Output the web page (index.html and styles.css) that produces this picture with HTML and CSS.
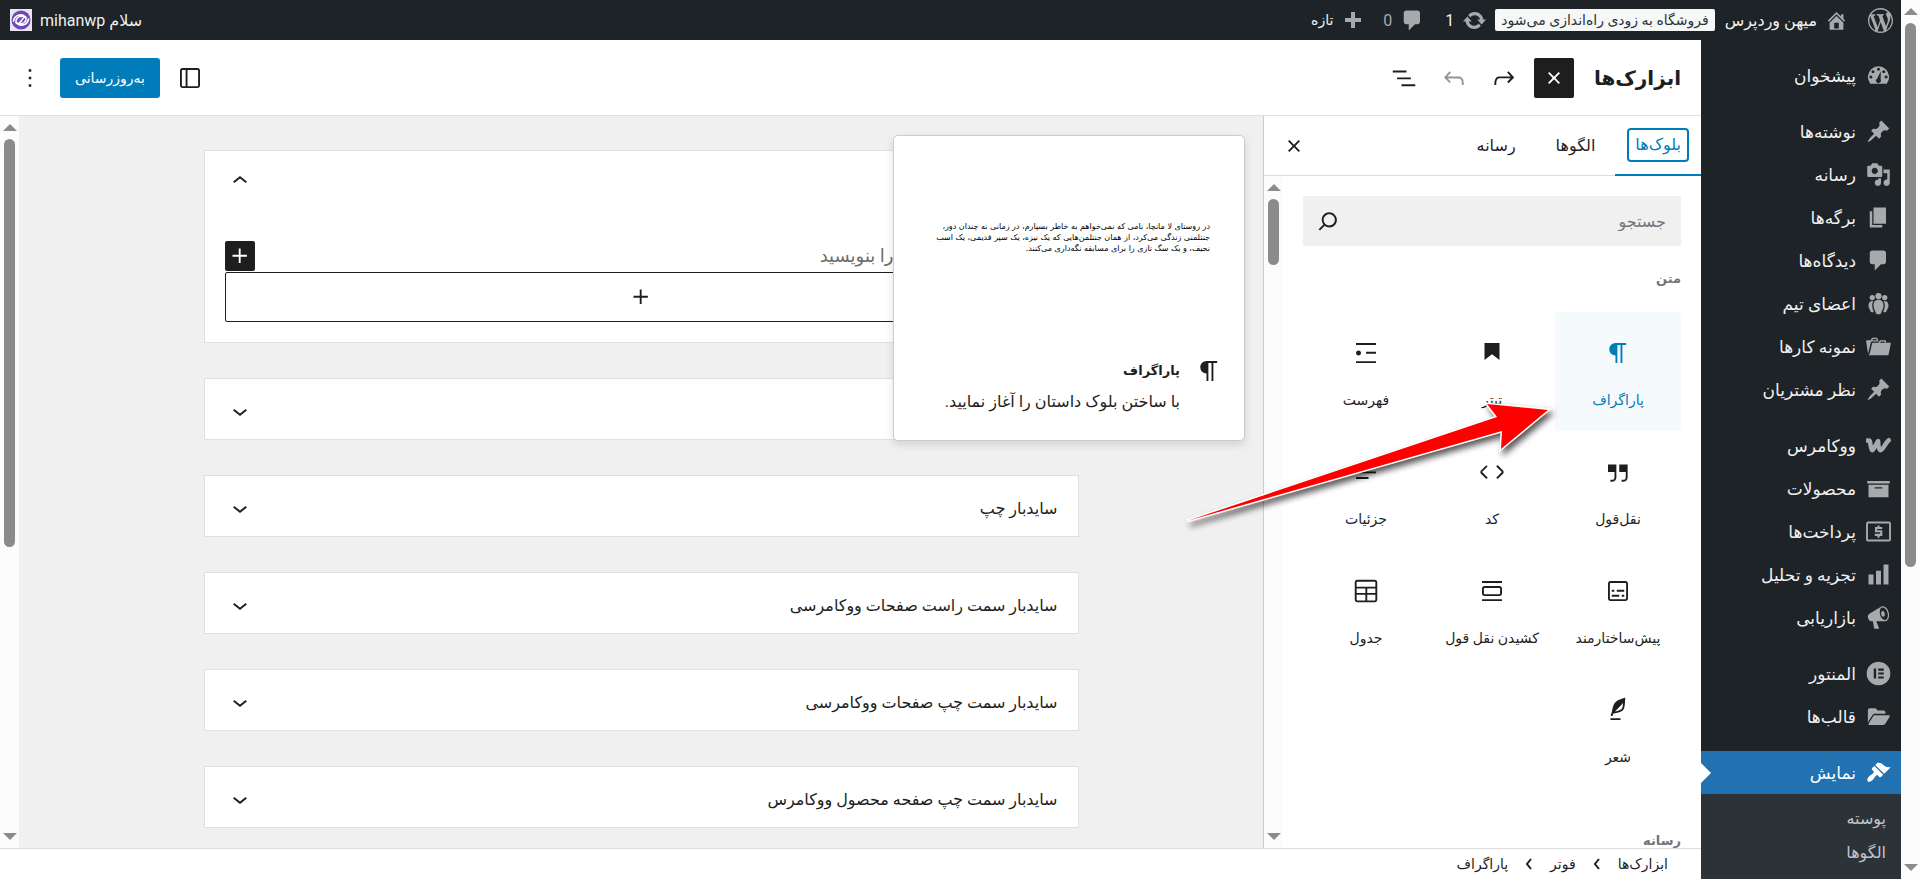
FILE: index.html
```html
<!DOCTYPE html>
<html lang="fa" dir="rtl">
<head>
<meta charset="utf-8">
<title>ابزارک‌ها</title>
<link rel="stylesheet" href="styles.css">
</head>
<body>
<svg class="sprite" aria-hidden="true">
  <symbol id="pin" viewBox="0 0 20 20"><path d="M10.44 3.02l1.82-1.82 6.36 6.35-1.83 1.82c-1.05-.68-2.48-.57-3.41.36l-.75.75c-.92.93-1.04 2.35-.35 3.41l-1.83 1.82-2.41-2.41-2.8 2.79c-.42.42-3.38 2.71-3.8 2.29s1.86-3.39 2.28-3.81l2.79-2.79L4.1 9.36l1.83-1.82c1.05.69 2.48.57 3.4-.36l.75-.75c.93-.92 1.05-2.35.36-3.41z"/></symbol>
  <symbol id="comment" viewBox="0 0 20 20"><path d="M5 2h9c1.1 0 2 .9 2 2v7c0 1.1-.9 2-2 2h-2l-5 5v-5H5c-1.1 0-2-.9-2-2V4c0-1.1.9-2 2-2z"/></symbol>
  <symbol id="close" viewBox="0 0 24 24"><path d="M12 13.06l3.712 3.713 1.061-1.06L13.061 12l3.712-3.712-1.06-1.06L12 10.938 8.288 7.227l-1.061 1.06L10.939 12l-3.712 3.712 1.06 1.061L12 13.061z"/></symbol>
  <symbol id="plus" viewBox="0 0 24 24"><path d="M11 12.5V17.5H12.5V12.5H17.5V11H12.5V6H11V11H6V12.5H11Z"/></symbol>
  <symbol id="down" viewBox="0 0 24 24"><path d="M17.5 11.6L12 16l-5.5-4.4.9-1.2L12 14l4.5-3.6 1 1.2z"/></symbol>
  <symbol id="paragraph" viewBox="0 0 24 24"><path d="M10 14v6h1.5V5.500H14V20h1.500V5.500h3V4H10a5 5 0 0 0 0 10z"/></symbol>
</svg>
<div class="page">
  <div class="scrollbar page-scroll" aria-hidden="true"><i class="up"></i><b></b><i class="dn"></i></div>
  <div class="site">
    <header class="adminbar">
      <a href="#" class="bar-item wp" aria-label="وردپرس"><svg class="i25" viewBox="0 0 20 20"><path d="M20 10c0-5.510-4.490-10-10-10C4.480 0 0 4.490 0 10c0 5.520 4.480 10 10 10 5.510 0 10-4.480 10-10zM7.780 15.370L4.370 6.220c.55-.02 1.170-.08 1.170-.08.5-.06.44-1.130-.06-1.110 0 0-1.450.11-2.370.11-.18 0-.37 0-.58-.01C4.120 2.690 6.870 1.110 10 1.110c2.330 0 4.450.87 6.050 2.340-.68-.11-1.650.39-1.650 1.580 0 .74.45 1.360.9 2.100.35.61.55 1.360.55 2.460 0 1.490-1.400 5-1.400 5l-3.030-8.370c.54-.02.82-.17.82-.17.5-.05.44-1.250-.06-1.220 0 0-1.440.12-2.380.12-.87 0-2.330-.12-2.330-.12-.5-.03-.56 1.200-.06 1.220l.92.08 1.260 3.410zM17.410 10c.24-.64.74-1.870.43-4.250.7 1.290 1.050 2.710 1.050 4.250 0 3.290-1.730 6.240-4.400 7.780.97-2.590 1.940-5.200 2.920-7.780zM6.100 18.090C3.120 16.650 1.110 13.530 1.110 10c0-1.300.23-2.480.72-3.590C3.250 10.300 4.670 14.200 6.100 18.090zm4.030-6.630l2.580 6.980c-.86.29-1.760.45-2.710.45-.79 0-1.570-.11-2.290-.33.81-2.380 1.620-4.740 2.420-7.100z"/></svg></a>
      <a href="#" class="bar-item home"><svg class="i23" viewBox="0 0 20 20"><path d="M16 8.500l1.530 1.530-1.060 1.060L10 4.600l-6.470 6.490-1.060-1.060L10 2.500l4 4v-2h2v4zm-6-2.460l6 5.990V18H4v-5.970zM12 17v-5H8v5h4z"/></svg><span>میهن وردپرس</span></a>
      <a href="#" class="store-badge">فروشگاه به زودی راه‌اندازی می‌شود</a>
      <a href="#" class="bar-item updates"><svg class="i25" viewBox="0 0 20 20"><path d="M10.200 3.280c3.530 0 6.430 2.610 6.920 6h2.080l-3.500 4-3.500-4h2.320c-.45-1.970-2.210-3.450-4.320-3.450-1.450 0-2.730.71-3.540 1.780L4.950 5.660C6.230 4.200 8.110 3.280 10.200 3.280zm-.4 13.440c-3.520 0-6.430-2.610-6.920-6H.8l3.500-4 3.500 4H5.480c.45 1.970 2.210 3.450 4.320 3.450 1.450 0 2.730-.71 3.540-1.780l1.710 1.950c-1.280 1.460-3.150 2.380-5.250 2.380z"/></svg><span>1</span></a>
      <a href="#" class="bar-item comments"><svg class="i25"><use href="#comment"/></svg><span>0</span></a>
      <a href="#" class="bar-item new"><svg class="i20" viewBox="0 0 20 20"><path d="M8 2h4v6h6v4h-6v6H8v-6H2V8h6z"/></svg><span>تازه</span></a>
      <a href="#" class="bar-item user"><span>سلام mihanwp</span><svg class="avatar" viewBox="0 0 22 22"><rect width="22" height="22" fill="#e9e5f3"/><circle cx="11" cy="11" r="9.500" fill="#6a4bb4"/><g fill="none" stroke="#fff" stroke-width="1.600" stroke-linecap="round"><path d="M3.500 12c1-6 8-8 11.500-4.500-4-1-8 0-9 4-.5 3 2 4 4 2l3-4"/><path d="M18.500 10c-1 6-8 8-11.500 4.500 4 1 8 0 9-4 .3-1.500-.8-2.500-2.300-2.300"/></g></svg></a>
    </header>
    <div class="shell">
      <nav class="menu" aria-label="منوی مدیریت">
        <ul>
          <li><a href="#"><svg viewBox="0 0 20 20"><path fill-rule="evenodd" d="M3.400 16.500A8.500 8.500 0 1 1 16.600 16.500zM10 3.800a1.200 1.200 0 1 0 .01 0zM5.600 5.700a1.200 1.200 0 1 0 .01 0zM14.200 5.700a1.200 1.200 0 1 0 .01 0zM3.900 9.900a1.200 1.200 0 1 0 .01 0zM16.100 9.900a1.200 1.200 0 1 0 .01 0zM11.800 6.500 9 12.300a2 2 0 1 0 2.700.8z"/></svg><span>پیشخوان</span></a></li>
          <li class="gap"><a href="#"><svg><use href="#pin"/></svg><span>نوشته‌ها</span></a></li>
          <li><a href="#"><svg viewBox="0 0 20 20"><path d="M13 11V4c0-.55-.45-1-1-1h-1.670L9 1H5L3.670 3H2c-.55 0-1 .45-1 1v7c0 .55.45 1 1 1h10c.55 0 1-.45 1-1zM7 4.500c1.380 0 2.500 1.120 2.500 2.500S8.380 9.500 7 9.500 4.500 8.380 4.500 7 5.620 4.500 7 4.500zM14 6h5v10.500c0 1.380-1.120 2.500-2.500 2.500S14 17.880 14 16.500s1.120-2.500 2.500-2.500c.17 0 .34.02.5.05V9h-3V6zm-4 8.050V13h2v3.500c0 1.380-1.120 2.500-2.500 2.500S7 17.880 7 16.500 8.120 14 9.500 14c.17 0 .34.02.5.05z"/></svg><span>رسانه</span></a></li>
          <li><a href="#"><svg viewBox="0 0 20 20"><path d="M6 15V2h10v13H6zm-1 1h8v2H3V5h2v11z"/></svg><span>برگه‌ها</span></a></li>
          <li><a href="#"><svg><use href="#comment"/></svg><span>دیدگاه‌ها</span></a></li>
          <li><a href="#"><svg viewBox="0 0 20 20"><circle cx="10" cy="4" r="2.500"/><circle cx="5" cy="5.200" r="2.100"/><circle cx="15" cy="5.200" r="2.100"/><path d="M10 7c3 0 4 2 4 4.500 0 3-1.500 4-2 6.500-.6.900-3.400.900-4 0-.5-2.500-2-3.500-2-6.500C6 9 7 7 10 7zM5.500 8C3 8 2 9.500 2 11.500c0 2.500 1.300 3 1.800 5 .5.600 1.700.700 2.400.300C5.600 14.500 5 14 5 11.500c0-1.500.2-2.500.9-3.400zM14.500 8c2.500 0 3.500 1.500 3.500 3.500 0 2.500-1.300 3-1.800 5-.5.600-1.700.700-2.400.300.600-2.300 1.200-2.800 1.200-5.300 0-1.500-.2-2.500-.9-3.400z"/></svg><span>اعضای تیم</span></a></li>
          <li><a href="#"><svg viewBox="0 0 20 20"><path d="M4 5H.78c-.37 0-.74.32-.69.84l1.560 9.990S3.500 8.470 3.860 6.700c.11-.53.61-.7.98-.7H10s-.7-2.080-.77-2.310C9.110 3.250 8.890 3 8.450 3H5.140c-.36 0-.7.23-.8.640C4.250 4.040 4 5 4 5zm4.880 0h-4s.42-1 .87-1h2.130c.48 0 1 1 1 1zM2.670 16.250c-.31.47-.76.75-1.260.75h15.730c.54 0 .92-.31 1.030-.83.44-2.190 1.680-8.440 1.680-8.440.07-.5-.3-.73-.62-.73H16V5.530c0-.16-.26-.53-.66-.53h-3.760c-.52 0-.87.58-.87.580L10 7H5.590c-.32 0-.63.19-.69.5 0 0-1.590 6.700-1.720 7.330-.07.37-.22.99-.51 1.420zM15.380 7H11s.58-1 1.130-1h2.290c.71 0 .96 1 .96 1z"/></svg><span>نمونه کارها</span></a></li>
          <li><a href="#"><svg><use href="#pin"/></svg><span>نظر مشتریان</span></a></li>
          <li class="gap"><a href="#"><svg viewBox="0 0 20 20"><path fill="none" stroke="currentColor" stroke-width="3.600" stroke-linejoin="round" stroke-linecap="round" d="M1 6h1.200c1.200 0 1 1 1.200 2.200.3 2 .7 5.600 1.600 5.600S8.600 8 9.700 6.500c.1 3 .4 7.300 2 7.300 1.800 0 3.800-6 6.500-8"/></svg><span>ووکامرس</span></a></li>
          <li><a href="#"><svg viewBox="0 0 20 20"><path d="M19 4v2H1V4h18zM2 7h16v10H2V7zm11 3V9H7v1h6z"/></svg><span>محصولات</span></a></li>
          <li><a href="#"><svg viewBox="0 0 20 20"><g fill="none" stroke="currentColor" stroke-width="1.500"><rect x=".8" y="2.800" width="18.400" height="14.400" rx=".8"/><path stroke-width="1.700" d="M13 7.200H8v2.600h4.200v2.900H7M10 5.200v2M10 12.700v2.200"/></g></svg><span>پرداخت‌ها</span></a></li>
          <li><a href="#"><svg viewBox="0 0 20 20"><path d="M18 18V2h-4v16h4zm-6 0V7H8v11h4zm-6 0v-8H2v8h4z"/></svg><span>تجزیه و تحلیل</span></a></li>
          <li><a href="#"><svg viewBox="0 0 20 20"><path d="M18.150 5.940c.46 1.620.38 3.220-.02 4.480-.42 1.280-1.260 2.180-2.300 2.480-.16.06-.26.06-.4.06-.06.02-.12.02-.18.02-.06.02-.14.02-.22.02h-6.800l2.220 5.500c.02.14-.06.26-.14.34-.08.1-.24.16-.34.16H6.950c-.1 0-.26-.06-.34-.16-.08-.08-.16-.2-.14-.34l-1-5.500H4.250l-.02-.02c-.5.06-1.080-.18-1.540-.62s-.88-1.080-1.060-1.880c-.24-.8-.2-1.560-.02-2.200.18-.62.58-1.080 1.060-1.300l.02-.02 9-5.400c.1-.06.18-.1.24-.16.06-.04.14-.08.24-.12.16-.08.28-.12.5-.18 1.040-.3 2.240.1 3.220.98s1.840 2.240 2.260 3.860zm-2.580 5.980h-.02c.4-.1.74-.34 1.040-.7.58-.7.86-1.760.86-3.040 0-.64-.1-1.300-.28-1.980-.34-1.360-1.020-2.500-1.780-3.240s-1.680-1.100-2.460-.88c-.82.22-1.400.96-1.700 2-.32 1.040-.28 2.360.06 3.720.38 1.360 1 2.500 1.800 3.240.78.74 1.620 1.100 2.480.88zm-2.540-7.080c.22-.04.42-.02.62.04.38.16.76.48 1.020 1s.42 1.200.42 1.780c0 .3-.04.56-.12.8-.18.48-.44.84-.86.94-.34.1-.8-.06-1.140-.4s-.64-.86-.78-1.500c-.18-.62-.12-1.240.02-1.720s.48-.84.82-.94z"/></svg><span>بازاریابی</span></a></li>
          <li class="gap"><a href="#"><svg viewBox="0 0 20 20"><path fill-rule="evenodd" d="M10 .5a9.500 9.500 0 1 0 .01 0zM6.200 6h1.900v8H6.200zM9.800 6h4.400v1.700H9.800zM9.800 9.150h4.400v1.700H9.800zM9.800 12.300h4.400V14H9.800z"/></svg><span>المنتور</span></a></li>
          <li><a href="#"><svg viewBox="0 0 20 20"><path d="M1.500 5c0-1 .6-1.700 1.500-1.700h4.600L9.500 5.200H14c.9 0 1.500.6 1.500 1.500v1H7.200c-.9 0-1.600.4-2.100 1.200L1.500 14.600zM7.300 9h11c.7 0 1 .5.600 1.100l-3.300 5.500c-.4.7-1 1.100-1.800 1.100H2.700c-.7 0-1-.5-.6-1.100l3.400-5.500C5.900 9.400 6.500 9 7.300 9z"/></svg><span>قالب‌ها</span></a></li>
          <li class="gap current"><a href="#" aria-current="page"><svg viewBox="0 0 20 20"><path d="M14.480 11.060L7.410 3.990l1.500-1.500c.5-.56 2.300-.47 3.510.32 1.210.8 1.430 1.280 2.910 2.100 1.180.64 2.450 1.260 4.450.85zm-.71.71L6.700 4.700 4.930 6.470c-.39.39-.39 1.020 0 1.410l1.060 1.060c.39.39.39 1.030 0 1.420-.6.6-1.430 1.110-2.210 1.690-.35.26-.7.53-1.010.84C1.430 14.230.4 16.080 1.400 17.070c.99 1 2.840-.03 4.180-1.360.31-.31.58-.66.85-1.020.57-.78 1.080-1.610 1.690-2.210.39-.39 1.020-.39 1.410 0l1.060 1.060c.39.39 1.020.39 1.410 0z"/></svg><span>نمایش</span></a>
            <ul class="submenu"><li><a href="#">پوسته</a></li><li><a href="#">الگوها</a></li></ul></li>
        </ul>
      </nav>
      <main class="workspace">
        <div class="toolbar">
          <h1>ابزارک‌ها</h1>
          <button class="tool dark" aria-label="بستن درج‌کننده"><svg class="i30"><use href="#close"/></svg></button>
          <button class="tool" aria-label="انجام دوباره"><svg class="i30" viewBox="0 0 24 24"><path d="M15.600 6.500l-1.100 1 2.900 3.300H8c-.9 0-1.700.3-2.300.9-1.400 1.500-1.400 4.200-1.400 5.600v.2h1.500v-.3c0-1.100 0-3.500 1-4.500.3-.3.7-.5 1.300-.5h9.200L14.500 15l1.100 1.100 4.600-4.600-4.600-5z"/></svg></button>
          <button class="tool muted" aria-label="واگرد"><svg class="i30" viewBox="0 0 24 24"><path d="M18.300 11.700c-.6-.6-1.400-.9-2.300-.9H6.700l2.900-3.300-1.100-1-4.500 5L8.500 16l1-1-2.700-2.700H16c.5 0 .9.2 1.300.5 1 1 1 3.400 1 4.500v.3h1.500v-.2c0-1.500 0-4.300-1.500-5.700z"/></svg></button>
          <button class="tool" aria-label="نمای فهرست"><svg class="i30" viewBox="0 0 24 24"><path d="M3 6h11v1.500H3V6Zm3.500 5.500h11V13h-11v-1.500ZM21 17H10v1.500h11V17Z"/></svg></button>
          <button class="tool push" aria-label="تنظیمات"><svg class="i30" viewBox="0 0 24 24"><path d="M18 4H6c-1.100 0-2 .9-2 2v12c0 1.100.9 2 2 2h12c1.100 0 2-.9 2-2V6c0-1.100-.9-2-2-2zM8.500 18.500H6c-.3 0-.5-.2-.5-.5V6c0-.3.2-.5.5-.5h2.500v13zm10-.5c0 .3-.2.5-.5.5h-8v-13h8c.3 0 .5.2.5.5v12z"/></svg></button>
          <button class="update">به‌روزرسانی</button>
          <button class="tool" aria-label="گزینه‌ها"><svg class="i30" viewBox="0 0 24 24"><path d="M13 19h-2v-2h2v2zm0-6h-2v-2h2v2zm0-6h-2V5h2v2z"/></svg></button>
        </div>
        <div class="body">
          <section class="inserter">
            <div class="tabs" role="tablist">
              <button class="tab active" role="tab" aria-selected="true"><span>بلوک‌ها</span></button>
              <button class="tab" role="tab"><span>الگوها</span></button>
              <button class="tab" role="tab"><span>رسانه</span></button>
              <button class="tool close-panel" aria-label="بستن"><svg class="i30"><use href="#close"/></svg></button>
            </div>
            <div class="inserter-scroll">
              <div class="blocks">
                <div class="search"><input type="search" placeholder="جستجو" aria-label="جستجو"><svg class="i30" viewBox="0 0 24 24"><path d="M13 5c-3.300 0-6 2.700-6 6 0 1.400.5 2.700 1.300 3.700l-3.800 3.800 1.100 1.100 3.800-3.800c1 .8 2.300 1.300 3.700 1.300 3.300 0 6-2.700 6-6S16.300 5 13 5zm0 10.500c-2.500 0-4.500-2-4.500-4.500s2-4.500 4.500-4.500 4.500 2 4.500 4.500-2 4.500-4.500 4.500z"/></svg></div>
                <h2>متن</h2>
                <div class="grid">
                  <button class="block selected"><svg class="i30"><use href="#paragraph"/></svg><span>پاراگراف</span></button>
                  <button class="block"><svg class="i30" viewBox="0 0 24 24"><path d="M6 4v13.600l6-4.700 6 4.700V4z"/></svg><span>تیتر</span></button>
                  <button class="block"><svg class="i30" viewBox="0 0 24 24"><path d="M4 4v1.500h16V4H4zm8 8.500h8V11h-8v1.500zM4 20h16v-1.500H4V20zm4-8c0-1.100-.9-2-2-2s-2 .9-2 2 .9 2 2 2 2-.9 2-2z"/></svg><span>فهرست</span></button>
                  <button class="block"><svg class="i30" viewBox="0 0 24 24"><path d="M13 6v6h5.200v4c0 .8-.2 1.400-.5 1.700-.6.6-1.600.6-2.500.5h-.3v1.500h.5c1 0 2.300-.1 3.300-1 .6-.6 1-1.600 1-2.800V6H13zm-9 6h5.200v4c0 .8-.2 1.400-.5 1.700-.6.6-1.600.6-2.500.5h-.3v1.500h.5c1 0 2.300-.1 3.300-1 .6-.6 1-1.600 1-2.800V6H4v6z"/></svg><span>نقل‌قول</span></button>
                  <button class="block"><svg class="i30" viewBox="0 0 24 24"><path d="M20.800 10.700l-4.300-4.300-1.100 1.100 4.300 4.300c.1.1.1.3 0 .4l-4.300 4.300 1.100 1.100 4.300-4.300c.7-.8.7-1.900 0-2.600zM4.200 11.800l4.300-4.300-1-1-4.300 4.300c-.7.7-.7 1.800 0 2.500l4.300 4.300 1.100-1.100-4.300-4.300c-.2-.1-.2-.3-.1-.4z"/></svg><span>کد</span></button>
                  <button class="block"><svg class="i30" viewBox="0 0 24 24"><path d="M4 16h10v1.500H4V16Zm0-4.500h16V13H4v-1.500ZM10 7h10v1.500H10V7Zm-6-1.750 4 2.500-4 2.500v-5Z"/></svg><span>جزئیات</span></button>
                  <button class="block"><svg class="i30" viewBox="0 0 24 24"><path d="M18 4H6c-1.100 0-2 .9-2 2v12c0 1.100.9 2 2 2h12c1.100 0 2-.9 2-2V6c0-1.100-.9-2-2-2zm.5 14c0 .3-.2.5-.5.5H6c-.3 0-.5-.2-.5-.5V6c0-.3.2-.5.5-.5h12c.3 0 .5.2.5.5v12zM7 16.500h6V15H7v1.500zm4-4h6V11h-6v1.500zM9 11H7v1.500h2V11zm6 5.500h2V15h-2v1.500z"/></svg><span>پیش‌ساختارمند</span></button>
                  <button class="block"><svg class="i30" viewBox="0 0 24 24"><path d="M18 8H6c-1.100 0-2 .9-2 2v4c0 1.100.9 2 2 2h12c1.100 0 2-.9 2-2v-4c0-1.100-.9-2-2-2zm.5 6c0 .3-.2.5-.5.5H6c-.3 0-.5-.2-.5-.5v-4c0-.3.2-.5.5-.5h12c.3 0 .5.2.5.5v4zM4 4v1.500h16V4H4zm0 16h16v-1.500H4V20z"/></svg><span>کشیدن نقل قول</span></button>
                  <button class="block"><svg class="i30" viewBox="0 0 24 24"><path d="M19 3H5c-1.100 0-2 .9-2 2v14c0 1.100.9 2 2 2h14c1.100 0 2-.9 2-2V5c0-1.100-.9-2-2-2zM5 4.500h14c.3 0 .5.2.5.5v3.500h-15V5c0-.3.2-.5.5-.5zm8 5.500h6.500v3.500H13V10zm-1.500 3.500h-7V10h7v3.500zm-7 5.500v-4h7v4.500H5c-.3 0-.5-.2-.5-.5zm14.500.5h-6V15h6.500v4c0 .3-.2.5-.5.5z"/></svg><span>جدول</span></button>
                  <button class="block"><svg class="i30" viewBox="0 0 24 24"><path d="M17.800 2l-.9.3c-.1 0-3.600 1-5.200 2.100C10 5.500 9.300 6.500 8.900 7.100c-.6.9-1.700 4.700-1.700 6.300l-.9 2.300c-.2.4 0 .8.4 1 .1 0 .2.1.3.1.3 0 .6-.2.7-.5l.6-1.500c.3 0 .7-.1 1.200-.2.7-.1 1.400-.3 2.200-.5.8-.2 1.600-.5 2.400-.8.7-.3 1.400-.7 1.900-1.200s.8-1.200 1-1.900c.2-.7.3-1.600.4-2.400.1-.8.1-1.700.2-2.500 0-.8.1-1.500.2-2.100V2zm-1.900 5.600c-.1.8-.2 1.500-.3 2.100-.2.6-.4 1-.6 1.300-.3.3-.8.6-1.400.9-.7.3-1.400.5-2.200.8-.6.2-1.300.3-1.800.4L15 7.500c.3-.3.6-.7 1-1.100 0 .4 0 .8-.1 1.200zM6 20h8v-1.500H6V20z"/></svg><span>شعر</span></button>
                </div>
                <h2>رسانه</h2>
              </div>
              <div class="scrollbar panel-scroll" aria-hidden="true"><i class="up"></i><b></b><i class="dn"></i></div>
            </div>
            <svg class="pointer" viewBox="0 0 380 136" aria-hidden="true"><path d="M12 119 322 15 312 2 373 8 326 47 327 29z"/></svg>
          </section>
          <section class="editor">
            <div class="areas">
              <article class="area open">
                <h3><button aria-expanded="true" aria-label="فوتر"><svg class="i30" viewBox="0 0 24 24"><path d="M6.500 12.400L12 8l5.500 4.400-.9 1.200L12 10l-4.500 3.600-1-1.200z"/></svg></button></h3>
                <div class="area-content">
                  <div class="empty-block"><p>را بنویسید</p><button aria-label="افزودن بلوک"><svg class="i30"><use href="#plus"/></svg></button></div>
                  <button class="appender" aria-label="افزودن بلوک"><svg class="i30"><use href="#plus"/></svg></button>
                </div>
              </article>
              <article class="area"><h3><button aria-label="سایدبار راست"><svg class="i30"><use href="#down"/></svg></button></h3></article>
              <article class="area"><h3><button><span>سایدبار چپ</span><svg class="i30"><use href="#down"/></svg></button></h3></article>
              <article class="area"><h3><button><span>سایدبار سمت راست صفحات ووکامرسی</span><svg class="i30"><use href="#down"/></svg></button></h3></article>
              <article class="area"><h3><button><span>سایدبار سمت چپ صفحات ووکامرسی</span><svg class="i30"><use href="#down"/></svg></button></h3></article>
              <article class="area"><h3><button><span>سایدبار سمت چپ صفحه محصول ووکامرس</span><svg class="i30"><use href="#down"/></svg></button></h3></article>
            </div>
            <div class="scrollbar editor-scroll" aria-hidden="true"><i class="up"></i><b></b><i class="dn"></i></div>
            <aside class="preview">
              <div class="sample"><p>در روستای لا مانچا، نامی که نمی‌خواهم به خاطر بسپارم، در زمانی نه چندان دور، جنتلمنی زندگی می‌کرد، از همان جنتلمن‌هایی که یک نیزه، یک سپر قدیمی، یک اسب نحیف، و یک سگ تازی را برای مسابقه نگه‌داری می‌کنند.</p></div>
              <div class="card"><svg class="i30"><use href="#paragraph"/></svg><div><h2>پاراگراف</h2><p>با ساختن بلوک داستان را آغاز نمایید.</p></div></div>
            </aside>
          </section>
        </div>
        <footer class="crumbs"><span>ابزارک‌ها</span><svg viewBox="0 0 8 12"><path d="M6 1 2 6l4 5"/></svg><span>فوتر</span><svg viewBox="0 0 8 12"><path d="M6 1 2 6l4 5"/></svg><span>پاراگراف</span></footer>
      </main>
    </div>
  </div>
</div>
</body>
</html>
```
FILE: styles.css
```css
* { box-sizing: border-box; }
body {
  margin: 0;
  font-family: Roboto, "DejaVu Sans", sans-serif;
  font-size: 14px;
  color: #1e1e1e;
  background: #fff;
}
h1, h2, h3, p, ul { margin: 0; padding: 0; }
ul { list-style: none; }
a { color: inherit; text-decoration: none; }
button { border: 0; background: none; padding: 0; margin: 0; font: inherit; color: inherit; }
svg { fill: currentColor; flex: none; display: block; }
.sprite { display: none; }
.i20 { width: 20px; height: 20px; }
.i23 { width: 23px; height: 23px; }
.i25 { width: 25px; height: 25px; }
.i30 { width: 30px; height: 30px; }

.page { display: flex; height: 100vh; overflow: hidden; }
.site { flex: 1; min-width: 0; display: flex; flex-direction: column; }

/* Scrollbars */
.scrollbar {
  width: 19px;
  flex: none;
  display: flex;
  flex-direction: column;
  align-items: center;
  gap: 8px;
  padding: 8px 0;
  background: #fcfcfc;
}
.scrollbar b { width: 11px; border-radius: 6px; background: #8b8b8b; }
.scrollbar i { border: 7px solid transparent; }
.scrollbar .up { border-top: 0; border-bottom-color: #8b8b8b; }
.scrollbar .dn { border-bottom: 0; border-top-color: #8b8b8b; margin-top: auto; }
.page-scroll b { height: 63%; }
.panel-scroll b { height: 10%; }
.editor-scroll b { height: 57%; }

/* Admin bar */
.adminbar {
  height: 40px;
  flex: none;
  display: flex;
  align-items: center;
  padding: 0 8px 0 10px;
  background: #1d2327;
  color: #f0f0f1;
}
.bar-item { display: flex; align-items: center; gap: 8px; white-space: nowrap; }
.bar-item svg { color: #a7aaad; }
.home { margin-right: 20px; font-size: 16px; }
.store-badge {
  margin: 0 10px 0 8px;
  padding: 0 6px;
  line-height: 22px;
  border-radius: 2px;
  background: #f6f7f7;
  color: #2c3338;
  white-space: nowrap;
}
.updates, .comments { font-size: 16px; }
.comments { margin-right: 20px; }
.comments span { color: #a7aaad; }
.new { margin-right: 20px; gap: 10px; }
.user { margin-right: auto; font-size: 16px; }
.user .avatar { width: 22px; height: 22px; }

.shell { flex: 1; min-height: 0; display: flex; }

/* Menu */
.menu { width: 200px; flex: none; padding-top: 14px; background: #1d2327; color: #f0f0f1; font-size: 17px; }
.menu > ul > li > a { display: flex; align-items: center; gap: 10px; height: 43px; padding-right: 10px; position: relative; }
.menu svg { width: 25px; height: 25px; color: #a7aaad; }
.gap { margin-top: 13px; }
.menu > ul > .current > a { background: #2271b1; color: #fff; }
.menu .current svg { color: #fff; }
.current > a::after {
  content: "";
  position: absolute;
  left: 0;
  top: 12px;
  border: 10px solid transparent;
  border-left-color: #fff;
  border-right: 0;
}
.submenu { background: #2c3338; padding: 8px 15px; height: 100px; color: #c3c4c7; font-size: 16px; line-height: 34px; }

/* Workspace */
.workspace { flex: 1; min-width: 0; display: flex; flex-direction: column; background: #fff; }
.toolbar { height: 76px; flex: none; display: flex; align-items: center; gap: 10px; padding: 0 20px 0 10px; border-bottom: 1px solid #e0e0e0; }
.toolbar h1 { font-size: 20px; line-height: 40px; margin-left: 10px; }
.tool { width: 40px; height: 40px; display: grid; place-items: center; border-radius: 2px; }
.dark { background: #1e1e1e; color: #fff; }
.muted { color: #949494; }
.push { margin-right: auto; }
.update { height: 40px; padding: 0 15px; border-radius: 3px; background: #007cba; color: #fff; }
.body { flex: 1; min-height: 0; display: flex; }

/* Inserter */
.inserter { width: 438px; flex: none; display: flex; flex-direction: column; position: relative; border-left: 1px solid #ccc; }
.tabs { display: flex; height: 60px; flex: none; align-items: stretch; border-bottom: 1px solid #ddd; }
.tab { padding: 0 12px; display: flex; align-items: center; margin-bottom: -1px; font-size: 16px; }
.tab span { display: block; padding: 0 8px; line-height: 34px; }
.active { color: #007cba; border-bottom: 2px solid #007cba; }
.active span { box-shadow: inset 0 0 0 2px #007cba; border-radius: 4px; }
.close-panel { margin: 10px auto 10px 10px; }
.inserter-scroll { flex: 1; min-height: 0; display: flex; }
.blocks { flex: 1; min-width: 0; overflow: hidden; padding: 20px; }
.search { display: flex; align-items: center; height: 50px; padding: 0 15px 0 10px; background: #f0f0f0; border-radius: 2px; font-size: 16px; }
.search input { flex: 1; min-width: 0; border: 0; outline: 0; background: none; font: inherit; padding: 0; }
.search input::placeholder { color: #757575; opacity: 1; }
.blocks h2 { font-size: 13px; line-height: 20px; margin-top: 23px; color: #757575; }
.grid { display: grid; grid-template-columns: repeat(3, 1fr); margin-top: 23px; padding-bottom: 20px; }
.block { height: 119px; display: flex; flex-direction: column; align-items: center; padding-top: 26px; gap: 20px; line-height: 24px; border-radius: 2px; white-space: nowrap; }
.selected { background: #f5fafd; color: #007cba; }
.pointer {
  position: absolute;
  left: -89px;
  top: 286px;
  width: 380px;
  height: 136px;
  fill: #ff0000;
  stroke: #fff;
  stroke-width: 3px;
  paint-order: stroke;
  filter: drop-shadow(3px 4px 3px #000a);
  z-index: 3;
}

/* Widget areas */
.editor { flex: 1; min-width: 0; display: flex; position: relative; background: #f0f0f0; }
.areas { flex: 1; min-width: 0; overflow: hidden; display: flex; flex-direction: column; align-items: center; gap: 35px; padding-top: 34px; }
.area { width: 100%; max-width: 875px; flex: none; background: #fff; border: 1px solid #e0e0e0; }
.area h3 { font-size: 16px; font-weight: 400; }
.area h3 button { display: flex; width: 100%; height: 60px; align-items: center; justify-content: space-between; padding: 4px 20px 0; }
.area h3 svg { margin-right: auto; }
.open h3 button { padding-top: 0; }
.area-content { padding: 30px 20px 20px; }
.empty-block { display: flex; align-items: center; justify-content: space-between; height: 31px; padding-bottom: 1px; font-size: 18px; line-height: 28px; color: #6c6c6c; }
.empty-block p { padding-right: 164px; }
.empty-block button { background: #1e1e1e; color: #fff; border-radius: 2px; }
.appender { display: grid; place-items: center; width: 100%; height: 50px; border: 1px solid #1e1e1e; border-radius: 2px; }

/* Block preview */
.preview {
  position: absolute;
  top: 19px;
  right: 18px;
  width: 352px;
  height: 306px;
  padding: 0 20px;
  background: #fff;
  border: 1px solid #ccc;
  border-radius: 5px;
  box-shadow: 0 4px 8px #0000001f;
}
.sample { height: 202px; display: flex; align-items: center; padding: 0 14px; font: 8px/11px "DejaVu Sans", sans-serif; color: #000; }
.card { display: flex; gap: 14px; padding-top: 18px; font-size: 16px; line-height: 32px; }
.card h2 { font-size: 13px; line-height: 30px; }
.card p { white-space: nowrap; }

.crumbs { height: 31px; flex: none; display: flex; align-items: center; gap: 17px; padding: 0 33px; border-top: 1px solid #ddd; }
.crumbs svg { width: 8px; height: 12px; fill: none; stroke: #1e1e1e; stroke-width: 2px; }
```
